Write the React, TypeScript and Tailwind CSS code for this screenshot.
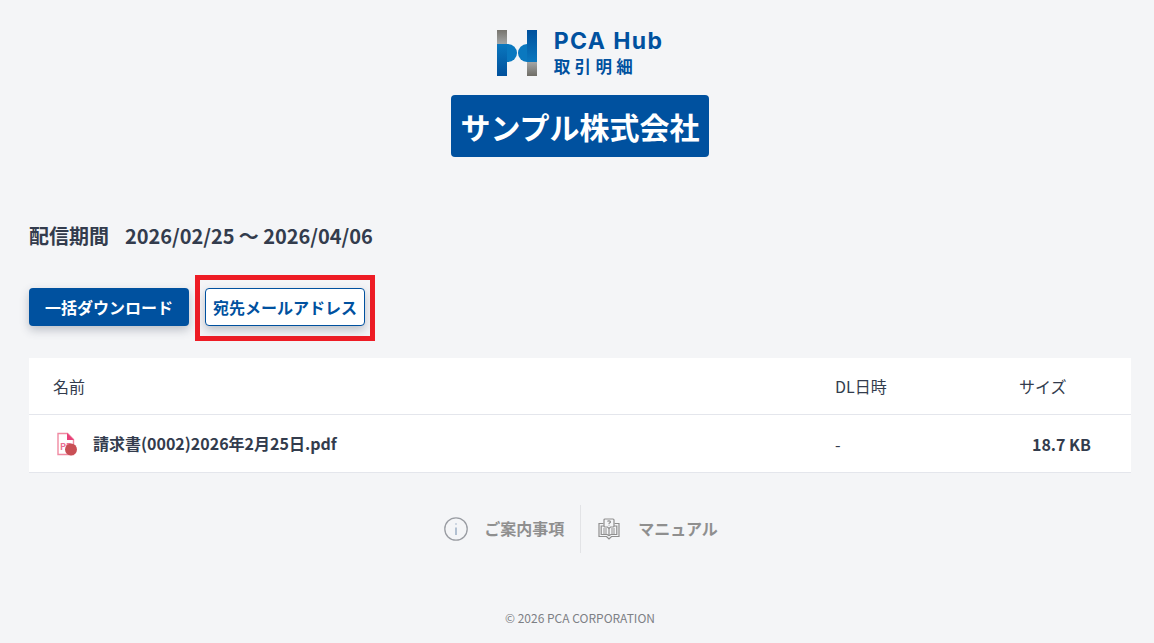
import React from 'react';

const font = { fontFamily: '"Noto Sans CJK JP", "Noto Sans", sans-serif' };

const HubLogo = () => (
  <svg width="40" height="46" viewBox="0 0 40 46">
    <defs>
      <linearGradient id="barA" x1="0" y1="0" x2="0" y2="1">
        <stop offset="0" stopColor="#77756f" />
        <stop offset="0.3" stopColor="#a3a5a5" />
        <stop offset="0.3" stopColor="#0a78bf" />
        <stop offset="1" stopColor="#00509c" />
      </linearGradient>
      <linearGradient id="barB" x1="0" y1="0" x2="0" y2="1">
        <stop offset="0" stopColor="#00509c" />
        <stop offset="0.7" stopColor="#0a78bf" />
        <stop offset="0.7" stopColor="#a3a5a5" />
        <stop offset="1" stopColor="#6f6d66" />
      </linearGradient>
    </defs>
    <rect x="0" y="0" width="10" height="46" fill="url(#barA)" />
    <rect x="30" y="0" width="10" height="46" fill="url(#barB)" />
    <path d="M10 14h1a9 9 0 0 1 0 18h-1z" fill="#0a78bf" />
    <path d="M30 14a9 9 0 0 0 0 18z" fill="#0a78bf" />
  </svg>
);

const PdfIcon = () => (
  <svg width="22" height="24" viewBox="0 0 22 24">
    <path d="M1 1.500h9.500l6 6v15h-15.500z" fill="#fff" stroke="#f08aa2" strokeWidth="1.4" />
    <path d="M10 1l7 7h-7z" fill="#e8417a" />
    <text x="3" y="18" fontSize="9" fontWeight="700" fill="#ec6f94">PD</text>
    <circle cx="14" cy="17.500" r="6" fill="#c94f55" />
  </svg>
);

const InfoIcon = () => (
  <svg width="24" height="24" viewBox="0 0 24 24" fill="none" stroke="#9a9da3" strokeWidth="1.3">
    <circle cx="12" cy="12" r="11.2" />
    <path d="M12 10.500v7.500" stroke="#8ea3bd" />
    <circle cx="12" cy="7" r="0.7" fill="#8ea3bd" stroke="none" />
  </svg>
);

const ManualIcon = () => (
  <svg width="22" height="22" viewBox="0 0 22 22" fill="none" stroke="#8f8f8f" strokeWidth="1.2">
    <path d="M5.500 5.500H1v13h7.500l2.500 2.500 2.500-2.500H21v-13h-4.500" />
    <path d="M6 8H3.200v8.500H9l2 1 2-1h5.800V8H16" />
    <path d="M11 10v7.500M5 11h4M5 13h4M5 15h4M13 11h4M13 13h4M13 15h4" />
    <path d="M7 1h8a1 1 0 0 1 1 1v6a1 1 0 0 1-1 1h-2.500L11 10.500 9.500 9H7a1 1 0 0 1-1-1V2a1 1 0 0 1 1-1z" fill="#f4f5f7" />
    <path d="M9.500 3.500c.4-1 3-1 3 .4 0 .9-1.500 1-1.500 2M11 6.800v.6" />
  </svg>
);

const App: React.FC = () => {
  return (
    <div className="min-h-[643px] bg-[#f4f5f7] text-[#333c4d] flex flex-col pl-[29px] pr-[23px]" style={font}>
      {/* Logo */}
      <div className="flex justify-center pt-[30px]">
        <div className="flex items-center gap-[17px]">
          <HubLogo />
          <div className="flex flex-col text-[#00519f] h-[46px] justify-between">
            <span className="text-[23px] leading-[22px] font-bold tracking-[1.4px] [font-family:Inter,sans-serif]">PCA Hub</span>
            <span className="text-[16.5px] leading-[20px] font-bold tracking-[4.4px]">取引明細</span>
          </div>
        </div>
      </div>

      <div className="flex justify-center mt-[19px]">
        <div className="bg-[#00519f] text-white rounded-[4px] h-[62px] w-[258px] flex items-center justify-center text-[30px] font-bold whitespace-nowrap">
          サンプル株式会社
        </div>
      </div>

      {/* Period */}
      <div className="mt-[64px] text-[20px] leading-[30px] font-bold whitespace-nowrap">
        配信期間<span className="ml-[16px] tracking-[-0.05px]">2026/02/25 〜 2026/04/06</span>
      </div>

      {/* Buttons */}
      <div className="flex items-start mt-[24px] gap-[6px]">
        <button className="w-[160px] h-[38px] mt-[13px] rounded-[4px] bg-[#00519f] text-white text-[16px] font-bold shadow-[0_4px_10px_rgba(60,70,90,0.3)] whitespace-nowrap">
          一括ダウンロード
        </button>
        <div className="border-[5px] border-[#ee1c25] w-[180px] h-[66px] flex justify-center">
          <button className="w-[160px] h-[38px] mt-[8px] rounded-[4px] bg-white border border-[#00519f] text-[#00519f] text-[16px] font-bold shadow-[0_4px_10px_rgba(60,70,90,0.3)] whitespace-nowrap">
            宛先メールアドレス
          </button>
        </div>
      </div>

      {/* File table */}
      <div className="mt-[17px] bg-white">
        <div className="flex items-center h-[57px] border-b border-[#e4e6ec] text-[16px]">
          <div className="flex-1 pl-[24px]">名前</div>
          <div className="w-[184px]">DL日時</div>
          <div className="w-[112px]">サイズ</div>
        </div>
        <div className="flex items-center h-[58px] border-b border-[#e4e6ec] text-[16px] font-bold">
          <div className="flex-1 pl-[28px] flex items-center gap-[14px]">
            <PdfIcon />
            <span className="-mt-[1px]">請求書(0002)2026年2月25日.pdf</span>
          </div>
          <div className="w-[184px] font-normal">-</div>
          <div className="w-[112px] text-right pr-[40px] whitespace-nowrap">18.7 KB</div>
        </div>
      </div>

      {/* Links */}
      <div className="flex justify-center mt-[32px] pl-[2px] text-[#8f8f8f] text-[16px] font-bold">
        <div className="flex items-center gap-[16px] h-[48px] pr-[16px] border-r border-[#e2e3e6]">
          <InfoIcon />
          <span className="-mt-[2px]">ご案内事項</span>
        </div>
        <div className="flex items-center gap-[18px] h-[48px] pl-[17px]">
          <ManualIcon />
          <span className="-mt-[2px]">マニュアル</span>
        </div>
      </div>

      <div className="mt-[56px] text-center text-[12px] leading-[18px] text-[#7d8085]">
        © 2026 PCA CORPORATION
      </div>
    </div>
  );
};

export default App;
